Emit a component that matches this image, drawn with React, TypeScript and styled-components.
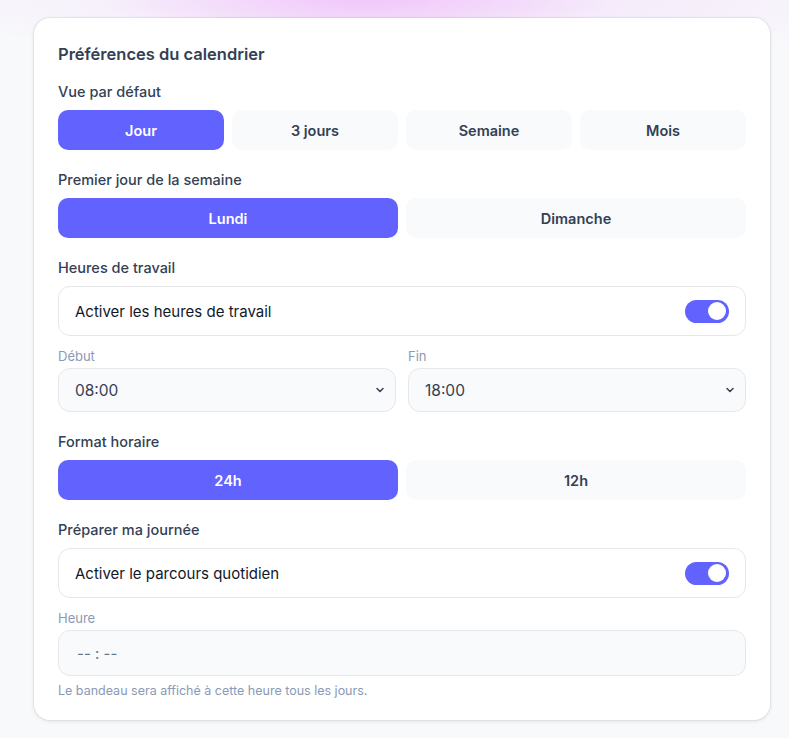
import React, { useState } from 'react'
import styled, { createGlobalStyle } from 'styled-components'

const GlobalStyle = createGlobalStyle`
  html, body {
    margin: 0;
    padding: 0;
  }
  body {
    font-family: Inter, "Noto Sans", sans-serif;
    background: #f8f9fb;
    color: #334155;
  }
  * {
    box-sizing: border-box;
  }
`

const Page = styled.div`
  min-height: 738px;
  padding: 18px 19px 17px 34px;
  background:
    radial-gradient(ellipse 260px 40px at 360px 0px, rgba(240, 190, 250, 0.75), rgba(240, 190, 250, 0) 100%),
    radial-gradient(ellipse 520px 60px at 420px 0px, rgba(240, 205, 250, 0.5), rgba(240, 205, 250, 0) 100%),
    #f8f9fb;
`

const Card = styled.section`
  background: #ffffff;
  border-radius: 16px;
  box-shadow: 0 0 0 1px rgba(15, 23, 42, 0.05), 0 1px 4px rgba(15, 23, 42, 0.1);
  padding: 24px 24px 22px;
  display: flex;
  flex-direction: column;
`

const Title = styled.h2`
  margin: 0 0 16px;
  font-size: 16.5px;
  line-height: 24px;
  font-weight: 600;
  color: #334155;
`

const Section = styled.div`
  display: flex;
  flex-direction: column;
  & + & {
    margin-top: 20px;
  }
`

const Label = styled.div`
  font-size: 14.5px;
  line-height: 20px;
  font-weight: 500;
  color: #334155;
  margin-bottom: 8px;
`

const Segmented = styled.div<{ $cols: number }>`
  display: grid;
  grid-template-columns: repeat(${({ $cols }) => $cols}, 1fr);
  gap: 8px;
`

const SegButton = styled.button<{ $active: boolean }>`
  height: 40px;
  border: none;
  border-radius: 10px;
  font-family: inherit;
  font-size: 14.5px;
  font-weight: 600;
  cursor: pointer;
  background: ${({ $active }) => ($active ? '#6262ff' : '#f8fafc')};
  color: ${({ $active }) => ($active ? '#ffffff' : '#334155')};
`

const ToggleRow = styled.div`
  height: 50px;
  border: 1px solid #e5e7eb;
  border-radius: 12px;
  padding: 0 16px;
  display: flex;
  align-items: center;
  justify-content: space-between;
  font-size: 15px;
  color: #111827;
`

const Switch = styled.button<{ $on: boolean }>`
  position: relative;
  width: 44px;
  height: 23px;
  border-radius: 999px;
  border: none;
  padding: 0;
  cursor: pointer;
  background: ${({ $on }) => ($on ? '#6262ff' : '#cbd5e1')};

  &::after {
    content: '';
    position: absolute;
    top: 2.5px;
    left: ${({ $on }) => ($on ? '23px' : '3px')};
    width: 18px;
    height: 18px;
    border-radius: 50%;
    background: #ffffff;
  }
`

const FieldGrid = styled.div`
  display: grid;
  grid-template-columns: 1fr 1fr;
  gap: 12px;
  margin-top: 12px;
`

const Field = styled.div<{ $spaced?: boolean }>`
  display: flex;
  flex-direction: column;
  gap: 4px;
  margin-top: ${({ $spaced }) => ($spaced ? '12px' : '0')};
`

const SmallLabel = styled.div`
  font-size: 13px;
  line-height: 16px;
  color: #8a99b5;
`

const SelectBox = styled.div`
  height: 44px;
  background: #f8fafc;
  border: 1px solid #e5e7eb;
  border-radius: 12px;
  padding: 0 10px 0 16px;
  display: flex;
  align-items: center;
  justify-content: space-between;
  font-size: 15.5px;
  color: #334155;
`

const TimeInput = styled.div`
  height: 46px;
  background: #f8fafc;
  border: 1px solid #e5e7eb;
  border-radius: 12px;
  padding: 0 18px;
  display: flex;
  align-items: center;
  font-size: 15px;
  color: #64748b;
`

const Hint = styled.div`
  margin-top: 8px;
  font-size: 12.5px;
  line-height: 14px;
  color: #8a99b5;
`

const Chevron = () => (
  <svg width="10" height="10" viewBox="0 0 10 10" fill="none">
    <path d="M2 3.5 L5 6.5 L8 3.5" stroke="#334155" strokeWidth="1.5" strokeLinecap="round" strokeLinejoin="round" />
  </svg>
)

export default function App() {
  const [view, setView] = useState('Jour')
  const [firstDay, setFirstDay] = useState('Lundi')
  const [format, setFormat] = useState('24h')
  const [work, setWork] = useState(true)
  const [daily, setDaily] = useState(true)

  return (
    <Page>
      <GlobalStyle />
      <Card>
        <Title>Préférences du calendrier</Title>

        <Section>
          <Label>Vue par défaut</Label>
          <Segmented $cols={4}>
            {['Jour', '3 jours', 'Semaine', 'Mois'].map((v) => (
              <SegButton key={v} $active={view === v} onClick={() => setView(v)}>
                {v}
              </SegButton>
            ))}
          </Segmented>
        </Section>

        <Section>
          <Label>Premier jour de la semaine</Label>
          <Segmented $cols={2}>
            {['Lundi', 'Dimanche'].map((v) => (
              <SegButton key={v} $active={firstDay === v} onClick={() => setFirstDay(v)}>
                {v}
              </SegButton>
            ))}
          </Segmented>
        </Section>

        <Section>
          <Label>Heures de travail</Label>
          <ToggleRow>
            <span>Activer les heures de travail</span>
            <Switch $on={work} onClick={() => setWork(!work)} />
          </ToggleRow>
          <FieldGrid>
            <Field>
              <SmallLabel>Début</SmallLabel>
              <SelectBox>
                <span>08:00</span>
                <Chevron />
              </SelectBox>
            </Field>
            <Field>
              <SmallLabel>Fin</SmallLabel>
              <SelectBox>
                <span>18:00</span>
                <Chevron />
              </SelectBox>
            </Field>
          </FieldGrid>
        </Section>

        <Section>
          <Label>Format horaire</Label>
          <Segmented $cols={2}>
            {['24h', '12h'].map((v) => (
              <SegButton key={v} $active={format === v} onClick={() => setFormat(v)}>
                {v}
              </SegButton>
            ))}
          </Segmented>
        </Section>

        <Section>
          <Label>Préparer ma journée</Label>
          <ToggleRow>
            <span>Activer le parcours quotidien</span>
            <Switch $on={daily} onClick={() => setDaily(!daily)} />
          </ToggleRow>
          <Field $spaced>
            <SmallLabel>Heure</SmallLabel>
            <TimeInput>-- : --</TimeInput>
          </Field>
          <Hint>Le bandeau sera affiché à cette heure tous les jours.</Hint>
        </Section>
      </Card>
    </Page>
  )
}
